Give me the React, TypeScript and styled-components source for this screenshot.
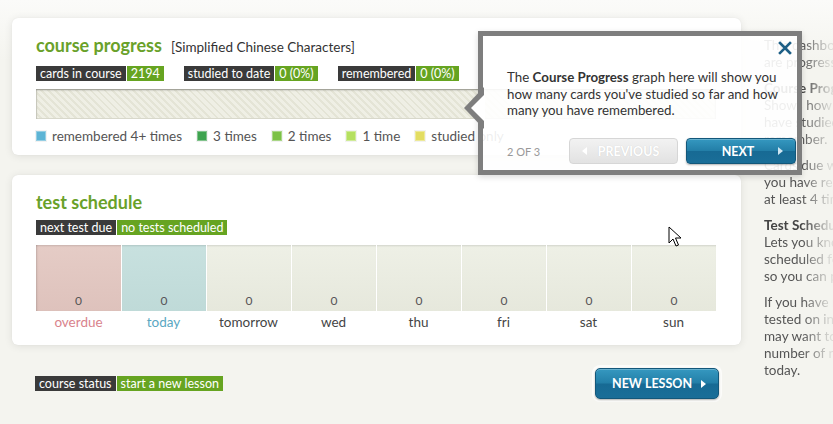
import React from "react";
import styled, { createGlobalStyle } from "styled-components";

const Global = createGlobalStyle`
  html, body { margin: 0; padding: 0; }
  body {
    width: 833px;
    height: 424px;
    overflow: hidden;
    background: #f4f4ef;
    font-family: Lato, "Open Sans", Arial, sans-serif;
    color: #444;
  }
  #root { height: 424px; }
`;

const Page = styled.div`
  position: relative;
  display: flex;
  gap: 23px;
  height: 424px;
  padding: 18px 0 0 12px;
  box-sizing: border-box;
  background: linear-gradient(#fbfbf9 0, #f4f4ef 60px);
`;

const Main = styled.div`
  width: 729px;
  flex: none;
  display: flex;
  flex-direction: column;
  gap: 20px;
`;

const Card = styled.section<{ $h: number }>`
  height: ${(p) => p.$h}px;
  box-sizing: border-box;
  background: #fff;
  border-radius: 6px;
  box-shadow: 0 1px 8px rgba(0, 0, 0, 0.09), 0 0 1px rgba(0, 0, 0, 0.08);
  padding: 16px 25px 0 24px;
  display: flex;
  flex-direction: column;
`;

const TitleRow = styled.div`
  display: flex;
  align-items: baseline;
  gap: 9px;
  height: 22px;
`;

const Title = styled.h2`
  margin: 0;
  font-size: 18px;
  font-weight: 700;
  color: #69a12a;
`;

const Subtitle = styled.span`
  font-size: 13.5px;
  color: #333;
`;

const BadgeRow = styled.div<{ $mt: number }>`
  display: flex;
  gap: 20px;
  margin-top: ${(p) => p.$mt}px;
`;

const Badge = styled.div`
  display: flex;
  gap: 1px;
  height: 15px;
`;

const BadgePart = styled.span<{ $green?: boolean }>`
  display: block;
  padding: 0 4px;
  font-size: 12.5px;
  line-height: 15px;
  color: #fff;
  background: ${(p) => (p.$green ? "#66a421" : "#3a3a3a")};
  white-space: nowrap;
`;

const Bar = styled.div`
  margin-top: 8px;
  height: 30px;
  box-sizing: border-box;
  background: repeating-linear-gradient(
    45deg,
    #efefe5 0px,
    #efefe5 3px,
    #e4e4d6 3px,
    #e4e4d6 5px
  );
  box-shadow: inset 0 1px 2px rgba(0, 0, 0, 0.35), inset 0 0 0 1px #dcdccf;
`;

const Legend = styled.div`
  display: flex;
  align-items: center;
  gap: 15px;
  margin-top: 10px;
  height: 14px;
`;

const LegendItem = styled.div`
  display: flex;
  align-items: center;
  gap: 6px;
  font-size: 13.5px;
  color: #555;
  white-space: nowrap;
`;

const Swatch = styled.span<{ $c: string }>`
  width: 10px;
  height: 10px;
  background: ${(p) => p.$c};
  box-shadow: inset 0 0 0 1px rgba(255, 255, 255, 0.35), 0 0 0 1px rgba(0, 0, 0, 0.05);
`;

const Calendar = styled.div`
  margin-top: 10px;
  display: grid;
  grid-template-columns: repeat(8, 1fr);
`;

const DayCol = styled.div`
  display: flex;
  flex-direction: column;
`;

const DayBox = styled.div<{ $kind: string }>`
  height: 66px;
  box-sizing: border-box;
  display: flex;
  align-items: flex-end;
  justify-content: center;
  padding-bottom: 3px;
  font-size: 12px;
  color: #555;
  border-left: ${(p) => (p.$kind === "overdue" ? "none" : "1px solid #fff")};
  background: ${(p) =>
    p.$kind === "overdue"
      ? "linear-gradient(#e5ccc6, #dec2bc)"
      : p.$kind === "today"
      ? "linear-gradient(#c8e1df, #bfdad8)"
      : "linear-gradient(#eef0e6, #e6e8dc)"};
  box-shadow: inset 0 2px 2px -1px rgba(0, 0, 0, 0.12)
    ${(p) => (p.$kind === "overdue" ? ", inset 2px 0 2px -1px rgba(0,0,0,0.15)" : "")};
`;

const DayLabel = styled.div<{ $kind: string }>`
  text-align: center;
  font-size: 13.5px;
  line-height: 22px;
  color: ${(p) =>
    p.$kind === "overdue" ? "#d9838c" : p.$kind === "today" ? "#5aa7c2" : "#444"};
`;

const Footer = styled.div`
  display: flex;
  align-items: center;
  justify-content: space-between;
  padding: 3px 22px 0 23px;
`;

const BlueButton = styled.button<{ $w: number; $h: number; $r: number }>`
  position: relative;
  width: ${(p) => p.$w}px;
  height: ${(p) => p.$h}px;
  border-radius: ${(p) => p.$r}px;
  border: 1px solid #13577a;
  background: linear-gradient(#3598c0 0%, #237fa8 48%, #176a94 52%, #1a6e98 100%);
  box-shadow: inset 0 1px 0 rgba(255, 255, 255, 0.25), 0 1px 2px rgba(0, 0, 0, 0.3);
  color: #fff;
  font-family: Lato, "Open Sans", Arial, sans-serif;
  font-weight: 700;
  font-size: 12.5px;
  padding: 0;
  display: flex;
  align-items: center;
  cursor: pointer;
`;

const NewLessonButton = styled(BlueButton)`
  padding-left: 16px;
  box-shadow: inset 0 1px 0 rgba(255, 255, 255, 0.25), 0 1px 2px rgba(0, 0, 0, 0.3),
    0 0 0 3px rgba(255, 255, 255, 0.7);
`;

const Tri = styled.span<{ $dir: "l" | "r"; $c: string }>`
  position: absolute;
  top: 50%;
  margin-top: -4px;
  ${(p) => (p.$dir === "r" ? "right: 12px;" : "left: 12px;")}
  width: 0;
  height: 0;
  border-top: 4px solid transparent;
  border-bottom: 4px solid transparent;
  ${(p) =>
    p.$dir === "r"
      ? `border-left: 5px solid ${p.$c};`
      : `border-right: 5px solid ${p.$c};`}
`;

const Sidebar = styled.aside`
  flex: 1;
  min-width: 0;
  overflow: hidden;
  white-space: nowrap;
  padding-top: 19px;
  font-size: 13.5px;
  line-height: 17px;
  color: #555;
  -webkit-mask-image: linear-gradient(to right, #000 0, #000 38px, rgba(0, 0, 0, 0.15) 66px);
  mask-image: linear-gradient(to right, #000 0, #000 38px, rgba(0, 0, 0, 0.15) 66px);
`;

const SideP = styled.p`
  margin: 0 0 9px;
`;

const SideHead = styled.b`
  color: #444;
  font-weight: 700;
`;

const Popup = styled.div`
  position: absolute;
  left: 478px;
  top: 31px;
  width: 324px;
  height: 144px;
  box-sizing: border-box;
  border: 5px solid #7e7e7e;
  background: rgba(255, 255, 255, 0.9);
  box-shadow: 0 2px 6px rgba(0, 0, 0, 0.15);
  display: flex;
  flex-direction: column;
  z-index: 5;
`;

const PopArrow = styled.svg`
  position: absolute;
  left: -19px;
  top: 51px;
`;

const Close = styled.button`
  position: absolute;
  right: 4px;
  top: 4px;
  width: 16px;
  height: 16px;
  padding: 0;
  border: none;
  background: none;
  cursor: pointer;
`;

const PopText = styled.p`
  margin: 33px 0 0 24px;
  font-size: 13.3px;
  line-height: 16.5px;
  color: #333;
  white-space: nowrap;
  b {
    font-weight: 700;
  }
`;

const PopFooter = styled.div`
  margin-top: auto;
  padding: 0 1px 6px 24px;
  display: flex;
  align-items: center;
  gap: 8px;
`;

const StepCount = styled.span`
  font-size: 11px;
  color: #999;
  margin-right: auto;
`;

const PrevButton = styled.button`
  position: relative;
  width: 109px;
  height: 26px;
  border-radius: 4px;
  border: 1px solid #d6d6d6;
  background: linear-gradient(#f2f2f2, #e2e2e2);
  color: #fff;
  font-family: Lato, "Open Sans", Arial, sans-serif;
  font-weight: 700;
  font-size: 12.5px;
  text-shadow: 0 0 1px rgba(0, 0, 0, 0.15);
  padding: 0 0 0 10px;
`;

const NextButton = styled(BlueButton)`
  justify-content: center;
  padding-right: 6px;
`;

const Cursor = styled.svg`
  position: absolute;
  left: 668px;
  top: 226px;
  z-index: 6;
`;

const legend = [
  { c: "#5db4d5", t: "remembered 4+ times" },
  { c: "#3ea34f", t: "3 times" },
  { c: "#7cc146", t: "2 times" },
  { c: "#b5e060", t: "1 time" },
  { c: "#e3dd62", t: "studied only" },
];

const days = [
  { k: "overdue", t: "overdue" },
  { k: "today", t: "today" },
  { k: "d", t: "tomorrow" },
  { k: "d", t: "wed" },
  { k: "d", t: "thu" },
  { k: "d", t: "fri" },
  { k: "d", t: "sat" },
  { k: "d", t: "sun" },
];

export default function App() {
  return (
    <>
      <Global />
      <Page>
        <Main>
          <Card $h={137}>
            <TitleRow>
              <Title>course progress</Title>
              <Subtitle>[Simplified Chinese Characters]</Subtitle>
            </TitleRow>
            <BadgeRow $mt={10}>
              <Badge>
                <BadgePart>cards in course</BadgePart>
                <BadgePart $green>2194</BadgePart>
              </Badge>
              <Badge>
                <BadgePart>studied to date</BadgePart>
                <BadgePart $green>0 (0%)</BadgePart>
              </Badge>
              <Badge>
                <BadgePart>remembered</BadgePart>
                <BadgePart $green>0 (0%)</BadgePart>
              </Badge>
            </BadgeRow>
            <Bar />
            <Legend>
              {legend.map((l) => (
                <LegendItem key={l.t}>
                  <Swatch $c={l.c} />
                  {l.t}
                </LegendItem>
              ))}
            </Legend>
          </Card>
          <Card $h={170}>
            <TitleRow>
              <Title>test schedule</Title>
            </TitleRow>
            <BadgeRow $mt={7}>
              <Badge>
                <BadgePart>next test due</BadgePart>
                <BadgePart $green>no tests scheduled</BadgePart>
              </Badge>
            </BadgeRow>
            <Calendar>
              {days.map((d) => (
                <DayCol key={d.t}>
                  <DayBox $kind={d.k}>0</DayBox>
                  <DayLabel $kind={d.k}>{d.t}</DayLabel>
                </DayCol>
              ))}
            </Calendar>
          </Card>
          <Footer>
            <Badge>
              <BadgePart>course status</BadgePart>
              <BadgePart $green>start a new lesson</BadgePart>
            </Badge>
            <NewLessonButton $w={124} $h={31} $r={5}>
              NEW LESSON
              <Tri $dir="r" $c="#fff" />
            </NewLessonButton>
          </Footer>
        </Main>
        <Sidebar>
          <SideP>
            This dashboard shows how you
            <br />
            are progressing with your course.
          </SideP>
          <SideP>
            <SideHead>Course Progress</SideHead>
            <br />
            Shows how many cards you
            <br />
            have studied and how many you
            <br />
            remember.
          </SideP>
          <SideP>
            Cards due will show how many
            <br />
            you have remembered
            <br />
            at least 4 times.
          </SideP>
          <SideP>
            <SideHead>Test Schedule</SideHead>
            <br />
            Lets you know when tests are
            <br />
            scheduled for your cards
            <br />
            so you can plan ahead.
          </SideP>
          <SideP>
            If you have many cards to be
            <br />
            tested on in one day, you
            <br />
            may want to reduce the
            <br />
            number of new cards studied
            <br />
            today.
          </SideP>
        </Sidebar>

        <Popup>
          <PopArrow width="22" height="42" viewBox="0 0 22 42">
            <polygon points="20,0 0,21 20,42" fill="#7e7e7e" />
            <polygon points="21,7 7,21 21,35" fill="#fff" />
          </PopArrow>
          <Close aria-label="close">
            <svg width="16" height="16" viewBox="0 0 16 16">
              <path d="M3 3 L13 13 M13 3 L3 13" stroke="#1d5f86" strokeWidth="2.6" strokeLinecap="square" />
            </svg>
          </Close>
          <PopText>
            The <b>Course Progress</b> graph here will show you
            <br />
            how many cards you've studied so far and how
            <br />
            many you have remembered.
          </PopText>
          <PopFooter>
            <StepCount>2 OF 3</StepCount>
            <PrevButton disabled>
              <Tri $dir="l" $c="#fff" />
              PREVIOUS
            </PrevButton>
            <NextButton $w={110} $h={26} $r={4}>
              NEXT
              <Tri $dir="r" $c="#cfe6f2" />
            </NextButton>
          </PopFooter>
        </Popup>

        <Cursor width="14" height="22" viewBox="0 0 14 22">
          <path
            d="M1 1 L1 17 L5 13 L8 20 L10.5 19 L7.5 12 L13 12 Z"
            fill="#fff"
            stroke="#000"
            strokeWidth="1"
            strokeLinejoin="round"
          />
        </Cursor>
      </Page>
    </>
  );
}
